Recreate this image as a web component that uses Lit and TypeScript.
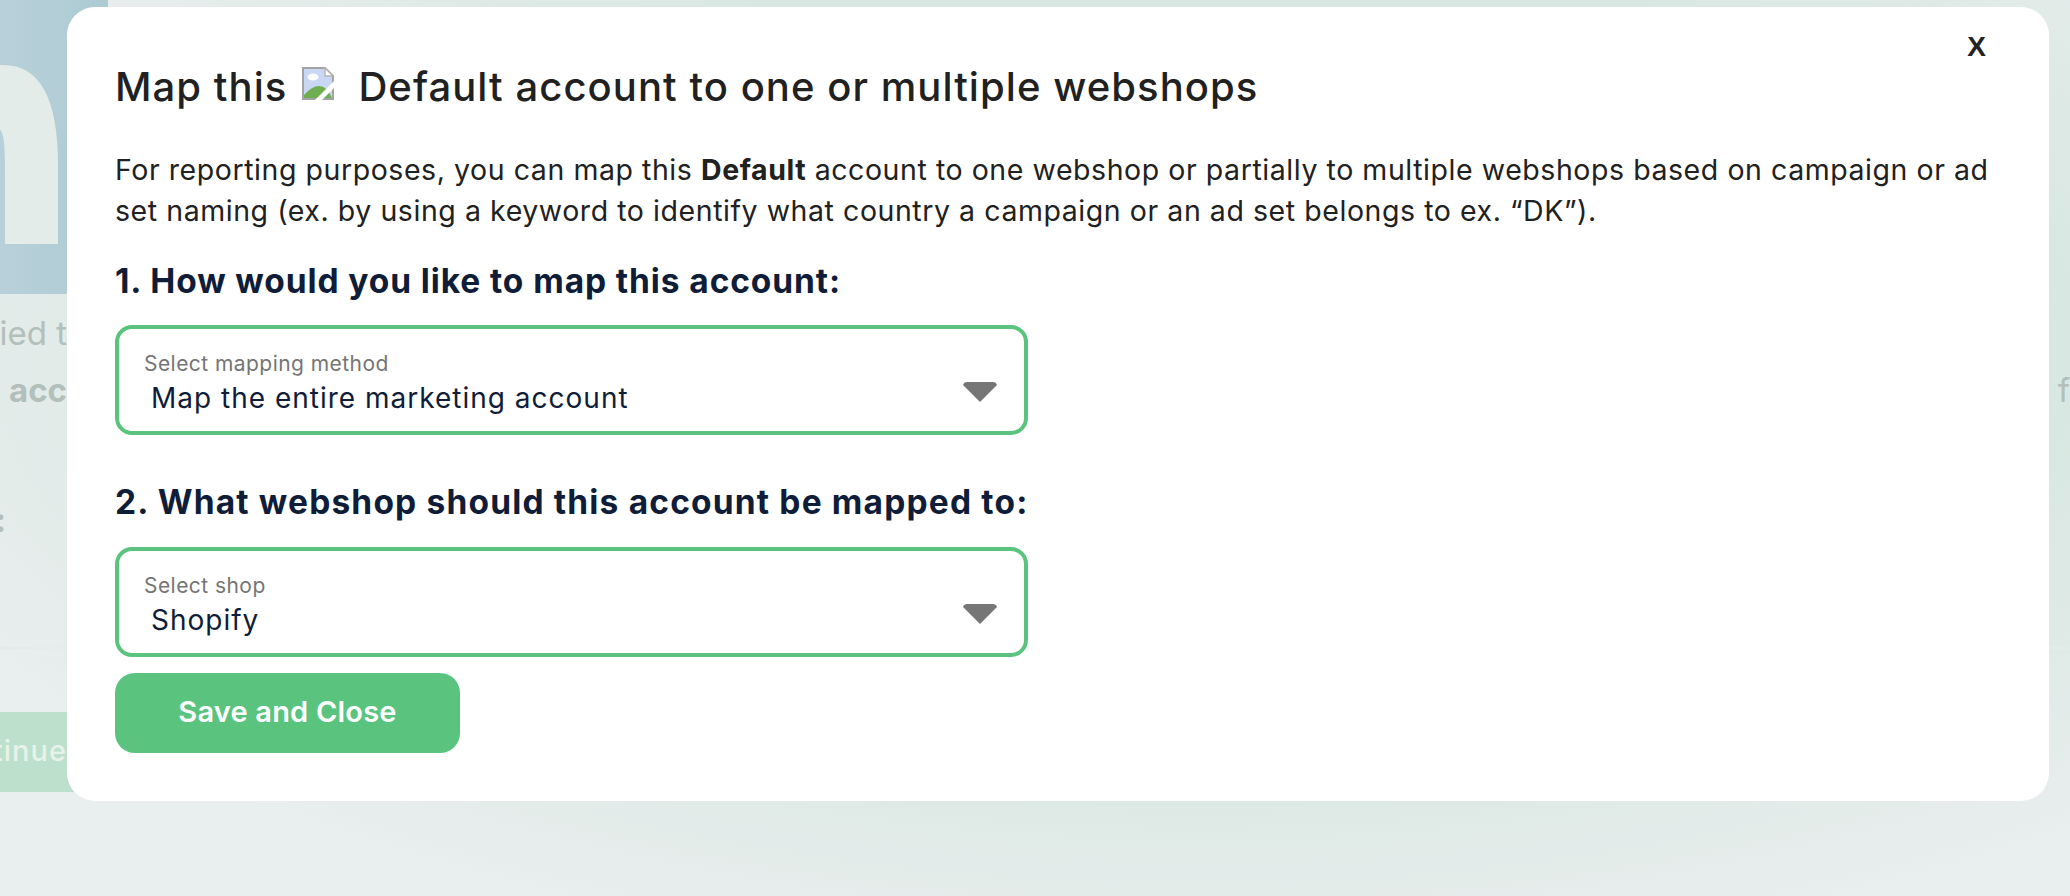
import { LitElement, html, css } from 'lit';
import { customElement } from 'lit/decorators.js';

@customElement('map-select')
export class MapSelect extends LitElement {
  static properties = { label: {}, value: {} };
  label = '';
  value = '';

  static styles = css`
    :host {
      display: block;
      width: 913px;
    }
    .box {
      box-sizing: border-box;
      height: 110px;
      border: 4px solid #5ac47f;
      border-radius: 17px;
      padding: 22px 0 0 25px;
      position: relative;
      background: #fff;
    }
    .label {
      font-size: 21px;
      line-height: 26px;
      color: #757575;
      letter-spacing: 0.45px;
    }
    .value {
      font-size: 28px;
      line-height: 38px;
      color: #101d38;
      margin: 2px 0 0 7px;
      letter-spacing: 1px;
    }
    svg {
      position: absolute;
      right: 27px;
      top: 53px;
      width: 34px;
      height: 20px;
    }
  `;

  render() {
    return html`
      <div class="box">
        <div class="label">${this.label}</div>
        <div class="value">${this.value}</div>
        <svg viewBox="0 0 34 20"><path d="M4 0H30Q33 0 34 3L17 20L0 3Q1 0 4 0Z" fill="#767676"/></svg>
      </div>
    `;
  }
}

@customElement('app-root')
export class AppRoot extends LitElement {
  static styles = css`
    :host {
      display: block;
      position: relative;
      width: 2070px;
      height: 896px;
      overflow: hidden;
      font-family: Inter, 'Open Sans', sans-serif;
    }
    .page {
      height: 896px;
      display: flex;
      flex-direction: column;
      background: radial-gradient(ellipse 1400px 620px at 1200px 350px, #d8e7e1 60%, #e9eeee 100%);
    }
    .hero {
      width: 108px;
      height: 294px;
      flex: none;
      background: linear-gradient(90deg, #b8d0da, #adcbd3);
    }
    .hero svg {
      display: block;
      width: 108px;
      height: 294px;
    }
    .row {
      display: flex;
      justify-content: space-between;
      font-size: 33px;
      line-height: 40px;
      color: #b2bfba;
    }
    .cell {
      width: 67px;
      display: flex;
      justify-content: flex-end;
      overflow: hidden;
      white-space: nowrap;
    }
    .side {
      width: 40px;
      display: flex;
      justify-content: flex-end;
      white-space: nowrap;
      font-weight: 400;
    }
    .one {
      margin-top: 19px;
    }
    .two {
      margin-top: 17px;
      font-weight: 700;
    }
    .three {
      margin-top: 90px;
      font-weight: 700;
    }
    .three .cell {
      justify-content: flex-start;
      margin-left: -5px;
    }
    .rule {
      height: 2px;
      margin-top: 107px;
      background: #e3ece8;
    }
    .continue {
      width: 200px;
      height: 80px;
      margin-top: 63px;
      background: #bde0cc;
      color: #e6f2ea;
      font-size: 29px;
      font-weight: 500;
      letter-spacing: 1px;
      line-height: 78px;
      white-space: nowrap;
      display: flex;
      justify-content: flex-end;
      padding-right: 133px;
      box-sizing: border-box;
    }
    .modal {
      position: absolute;
      left: 67px;
      top: 7px;
      box-sizing: border-box;
      width: 1982px;
      height: 794px;
      padding: 55px 48px 0;
      background: #fff;
      border-radius: 28px;
    }
    .close {
      position: absolute;
      top: 20px;
      right: 63px;
      font-family: 'Liberation Sans', sans-serif;
      font-size: 28px;
      line-height: 40px;
      font-weight: 700;
      color: #222;
    }
    h2 {
      display: flex;
      align-items: center;
      margin: 0;
      font-size: 40px;
      line-height: 50px;
      font-weight: 500;
      color: #212121;
      letter-spacing: 1.06px;
      white-space: nowrap;
    }
    h2 svg {
      width: 32px;
      height: 33px;
      margin: 0 24px 7px 15px;
    }
    p {
      margin: 37px 0 0;
      font-size: 28.5px;
      line-height: 41px;
      color: #212121;
      letter-spacing: 0.56px;
      width: 1886px;
    }
    p b {
      font-weight: 700;
    }
    h3 {
      margin: 28px 0 0;
      font-size: 33.5px;
      line-height: 44px;
      font-weight: 700;
      color: #101d38;
      letter-spacing: 0.9px;
    }
    map-select {
      margin-top: 22px;
    }
    h3.second {
      margin-top: 45px;
      letter-spacing: 1.17px;
    }
    h3.second + map-select {
      margin-top: 23px;
    }
    button {
      display: block;
      width: 345px;
      height: 80px;
      margin-top: 16px;
      padding: 0 0 4px;
      border: 0;
      border-radius: 20px;
      background: #5ac47f;
      color: #fff;
      font-family: inherit;
      font-size: 29px;
      font-weight: 600;
      letter-spacing: 0.2px;
    }
  `;

  render() {
    return html`
      <div class="page">
        <div class="hero">
          <svg viewBox="0 0 108 294">
            <path d="M0 65Q58 62 58 165V244H5V170Q5 132 0 130Z" fill="#e3ece8"/>
          </svg>
        </div>
        <div class="row one"><div class="cell">verified t</div></div>
        <div class="row two">
          <div class="cell">acc</div>
          <div class="side">e f</div>
        </div>
        <div class="row three"><div class="cell">:</div></div>
        <div class="rule"></div>
        <div class="continue">Continue</div>
      </div>

      <div class="modal">
        <div class="close">X</div>
        <h2>
          Map this
          <svg viewBox="0 0 32 33">
            <path d="M1 1H23L31 9V32H1Z" fill="#c8d7f3" stroke="#a3a3a3" stroke-width="2"/>
            <path d="M23 1V9H31Z" fill="#fff" stroke="#b5b5b5" stroke-width="1.5"/>
            <ellipse cx="11" cy="10" rx="5.5" ry="3.5" fill="#fff"/>
            <path d="M2 31V28Q10 19 17 19Q25 19 30 31Z" fill="#6fae4e"/>
            <path d="M13 33L33 13V20L20 33Z" fill="#fff"/>
          </svg>
          Default account to one or multiple webshops
        </h2>
        <p>
          For reporting purposes, you can map this <b>Default</b> account to one webshop or partially to multiple
          webshops based on campaign or ad set naming (ex. by using a keyword to identify what country a campaign or an
          ad set belongs to ex. “DK”).
        </p>
        <h3>1. How would you like to map this account:</h3>
        <map-select label="Select mapping method" value="Map the entire marketing account"></map-select>
        <h3 class="second">2. What webshop should this account be mapped to:</h3>
        <map-select label="Select shop" value="Shopify"></map-select>
        <button>Save and Close</button>
      </div>
    `;
  }
}
